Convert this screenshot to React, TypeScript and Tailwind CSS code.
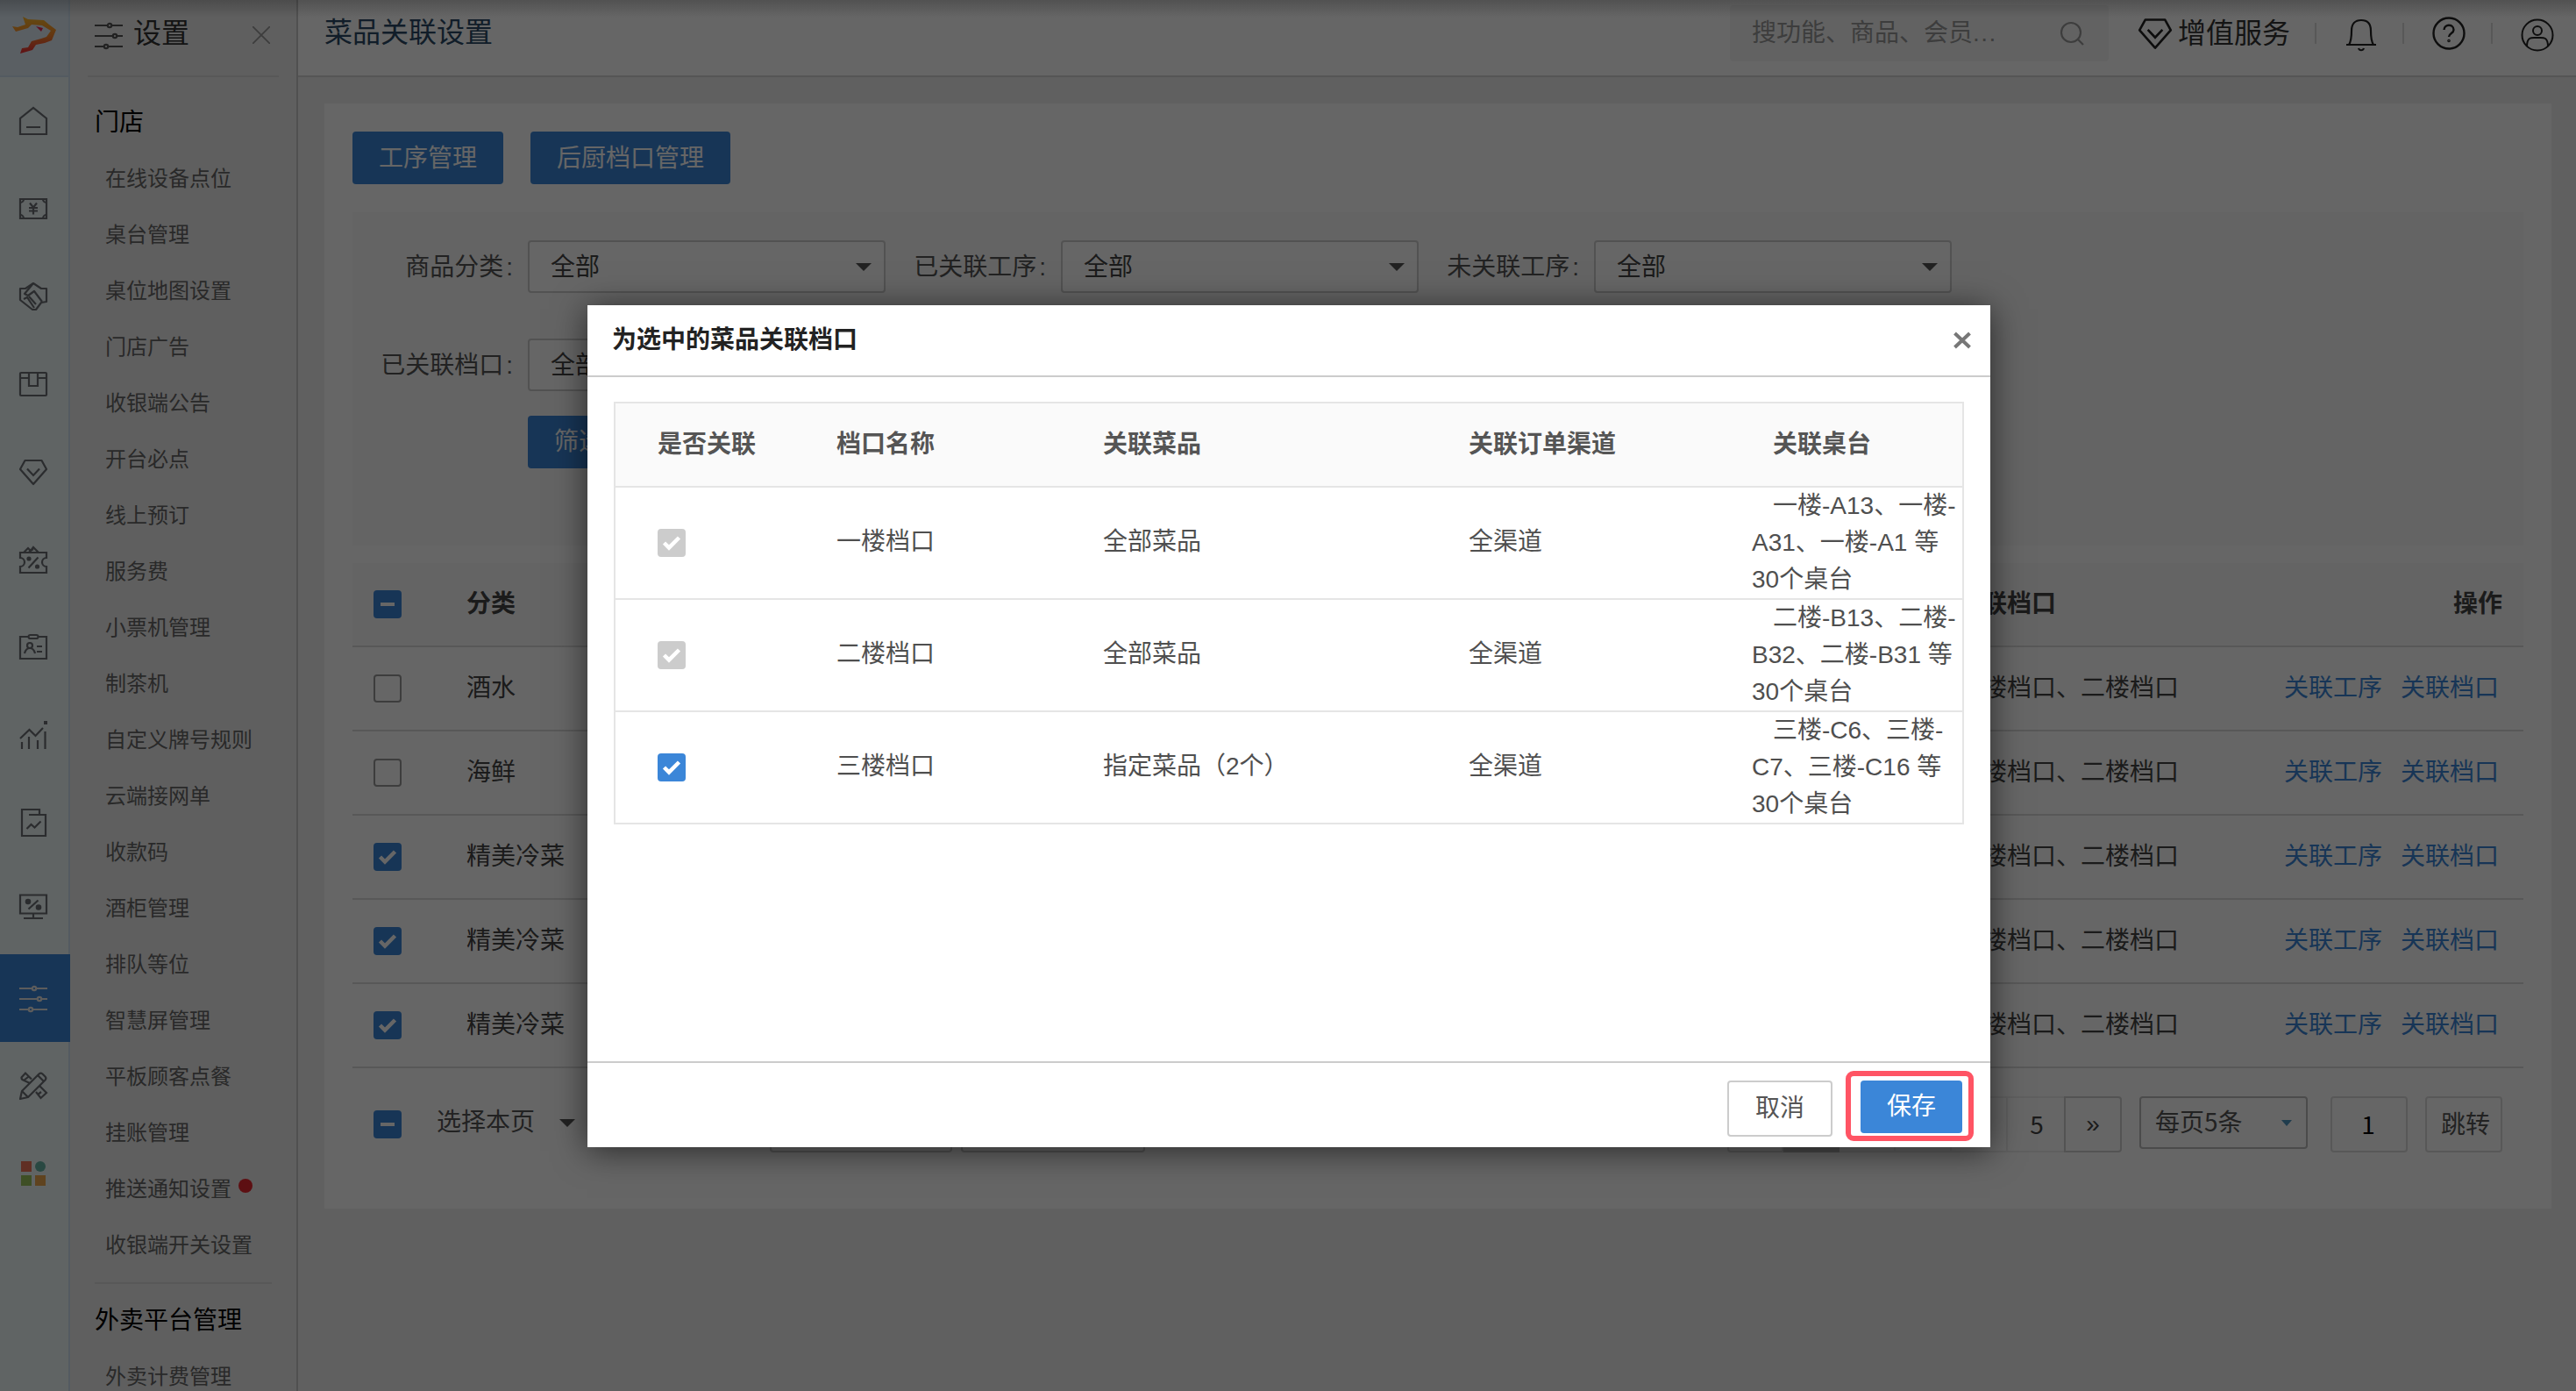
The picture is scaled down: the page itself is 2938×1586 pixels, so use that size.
import React from 'react';

const menuItems = [
  '在线设备点位',
  '桌台管理',
  '桌位地图设置',
  '门店广告',
  '收银端公告',
  '开台必点',
  '线上预订',
  '服务费',
  '小票机管理',
  '制茶机',
  '自定义牌号规则',
  '云端接网单',
  '收款码',
  '酒柜管理',
  '排队等位',
  '智慧屏管理',
  '平板顾客点餐',
  '挂账管理',
  '推送通知设置',
  '收银端开关设置',
];

const dishRows = [
  { id: 1, category: '酒水', checked: false },
  { id: 2, category: '海鲜', checked: false },
  { id: 3, category: '精美冷菜', checked: true },
  { id: 4, category: '精美冷菜', checked: true },
  { id: 5, category: '精美冷菜', checked: true },
];

const stallRows = [
  {
    name: '一楼档口',
    dishes: '全部菜品',
    channel: '全渠道',
    tables: ['一楼-A13、一楼-', 'A31、一楼-A1 等', '30个桌台'],
    disabled: true,
  },
  {
    name: '二楼档口',
    dishes: '全部菜品',
    channel: '全渠道',
    tables: ['二楼-B13、二楼-', 'B32、二楼-B31 等', '30个桌台'],
    disabled: true,
  },
  {
    name: '三楼档口',
    dishes: '指定菜品（2个）',
    channel: '全渠道',
    tables: ['三楼-C6、三楼-', 'C7、三楼-C16 等', '30个桌台'],
    disabled: false,
  },
];

function Icon({ children, className = 'size-8' }: { children: React.ReactNode; className?: string }) {
  return (
    <svg viewBox="0 0 32 32" fill="none" stroke="currentColor" strokeWidth="2.200" className={`overflow-visible ${className}`}>
      {children}
    </svg>
  );
}

const slidersShape = (
  <>
    <path d="M0 5h14.5M19.5 5H32M0 17h20.5M25.5 17H32M0 29h10.5M15.5 29H32" />
    <circle cx="17" cy="5" r="2.2" />
    <circle cx="23" cy="17" r="2.2" />
    <circle cx="13" cy="29" r="2.2" />
  </>
);

const diamondShape = (
  <>
    <path d="M6.5 3h19L31 13 16 30 1 13z" strokeLinejoin="round" />
    <path d="M9 12.5l7 7.5 7-7.5" />
  </>
);

// 左侧一级导航图标
const railIcons: { key: string; shape: React.ReactNode }[] = [
  { key: 'home', shape: <path d="M1 31V13L16 1l15 12v18zM8 23h16" /> },
  {
    key: 'cash',
    shape: (
      <>
        <path d="M1 5h30v22H1z" />
        <path d="M1 9a4 4 0 0 0 4-4M31 9a4 4 0 0 1-4-4M1 23a4 4 0 0 1 4 4M31 23a4 4 0 0 0-4 4" />
        <path d="M12 9.500l4 5 4-5M16 14v8.500M11 15h10M11 18.500h10" />
      </>
    ),
  },
  {
    key: 'handshake',
    shape: (
      <>
        <path d="M1 7h6l9-6 9 6h6v15l-6 1-6 8h-4L1 20z" strokeLinejoin="round" />
        <path d="M16 1L6 13l4 2 7-5 9 12M5 19l4-2 8 12M11 16l8 9" strokeLinejoin="round" />
      </>
    ),
  },
  {
    key: 'box',
    shape: (
      <>
        <rect x="1" y="3" width="30" height="26" rx="1" />
        <path d="M1 9h10M21 9h10M11 3v15h10V3" />
      </>
    ),
  },
  { key: 'diamond', shape: diamondShape },
  {
    key: 'ticket',
    shape: (
      <>
        <path d="M1 8h30v6a5 5 0 0 0 0 10v7H1v-7a5 5 0 0 0 0-10z" />
        <path d="M5 8l5-5 3 3 3-4 6 6M11 7l5-3M10.500 25.500l11-12" />
        <circle cx="11" cy="15" r="1.500" fill="currentColor" />
        <circle cx="20.500" cy="24" r="1.500" fill="currentColor" />
      </>
    ),
  },
  {
    key: 'badge',
    shape: (
      <>
        <path d="M10 4H1v25h30V4h-9" />
        <rect x="10.500" y="2" width="11" height="4" rx="2" />
        <circle cx="12" cy="14" r="3" />
        <path d="M6 23c1-4 3-6 6-6s5 2 6 6M20 15h6M20 21h6" />
      </>
    ),
  },
  {
    key: 'chart',
    shape: (
      <>
        <path d="M1 20L11.500 10l7 7L27 8M3 32v-8M11 32V18M21 32V22M29.500 32V12" />
        <path d="M28 0h4v4h-4z" fill="currentColor" stroke="none" />
      </>
    ),
  },
  {
    key: 'report',
    shape: (
      <>
        <path d="M11 7h19v24H3V1h20v6" />
        <path d="M8.500 23l5-5 4 3.500 7-7" />
      </>
    ),
  },
  {
    key: 'monitor',
    shape: (
      <g transform="translate(0 -2.500)">
        <path d="M1 1h30v21H1zM16 22v5M5 27.500h22" />
        <path d="M10.500 17L21.500 7" />
        <circle cx="10" cy="8.500" r="2.200" fill="currentColor" />
        <circle cx="22" cy="15" r="2.200" fill="currentColor" />
      </g>
    ),
  },
  { key: 'settings', shape: slidersShape },
  {
    key: 'tools',
    shape: (
      <>
        <path d="M1 31l2-9L22.500 2.500a3 3 0 0 1 4 0l3 3a3 3 0 0 1 0 4L10 29z" strokeLinejoin="round" />
        <path d="M3 22l7 7M21 4l7 7M12 13L4.500 9.500a3 3 0 0 1-2-3L7 1.500l7 7M5 10l5-4M19 23l5.500 7L31 24l-8-8M21 26l4-3" />
      </>
    ),
  },
];

function Logo() {
  return (
    <svg viewBox="13 18 52 44" className="ml-[13px] h-[44px] w-[52px]">
      <defs>
        <linearGradient id="logo" x1="0" y1="0" x2="0" y2="1">
          <stop offset="0" stopColor="#fcb82c" />
          <stop offset="0.500" stopColor="#f98a2c" />
          <stop offset="1" stopColor="#ee2c38" />
        </linearGradient>
      </defs>
      <path
        d="M14 30l6 1 9-3-3-9 6 3 18 1 6 5 8 6-5 12-8 3-10 2-4 6-14 4 2-6 7-1 4-7 11-3 6-2 5-7-10-6-12-1-4 4-14 4z"
        fill="url(#logo)"
      />
      <path d="M41 30l8 2-2 4z" fill="#ee2650" />
    </svg>
  );
}

function Caret({ className = 'text-[#555]' }: { className?: string }) {
  return (
    <svg viewBox="0 0 18 9" className={`h-[9px] w-[18px] ${className}`}>
      <path d="M0 0h18L9 9z" fill="currentColor" />
    </svg>
  );
}

function Checkbox({ state }: { state: 'off' | 'on' | 'some' | 'disabled' }) {
  if (state === 'off') {
    return <span className="block size-8 rounded border-2 border-[#999] bg-white" />;
  }
  return (
    <span
      className={`flex size-8 items-center justify-center rounded ${
        state === 'disabled' ? 'bg-[#ccc]' : 'bg-[#3b86d8]'
      }`}
    >
      {state === 'some' ? (
        <span className="h-1 w-4 bg-white" />
      ) : (
        <svg viewBox="0 0 32 32" className="size-8" fill="none" stroke="#fff" strokeWidth="4.500">
          <path d="M7.500 16l5.500 5.500L24.500 10" />
        </svg>
      )}
    </span>
  );
}

function FilterField({ label }: { label: string }) {
  return (
    <div className="flex h-[60px] w-[608px] items-center">
      <span className="w-[200px] pt-0.5 pr-[17px] text-right text-[#555]">
        {label}
        <span className="ml-[3px]">:</span>
      </span>
      <div className="flex h-[60px] w-[408px] items-center justify-between rounded border-2 border-[#ccc] bg-white pr-[14px] pl-6 text-[#444]">
        <span className="pt-0.5">全部</span>
        <Caret />
      </div>
    </div>
  );
}

function Rail() {
  return (
    <nav className="flex w-20 shrink-0 flex-col border-r-2 border-[#d3e3f2] bg-[#eff9fb]">
      <div className="flex h-[88px] items-center border-b-2 border-[#d3e3f2] bg-[#e2eef7] pb-1.5">
        <Logo />
      </div>
      {railIcons.map((icon) => (
        <div
          key={icon.key}
          className={`flex h-[100px] items-center pl-[22px] ${
            icon.key === 'settings' ? '-mr-0.5 bg-[#3b86d8] text-[#e6e6e6]' : 'text-[#6b6f74]'
          }`}
        >
          <Icon>{icon.shape}</Icon>
        </div>
      ))}
      <div className="flex h-[100px] items-center pl-6">
        <div className="grid grid-cols-2 gap-1">
          <span className="size-3 bg-[#f0765a]" />
          <span className="size-3 rounded-full bg-[#68b5a6]" />
          <span className="size-3 bg-[#9cc65c]" />
          <span className="size-3 bg-[#eda84e]" />
        </div>
      </div>
    </nav>
  );
}

function SettingsMenu() {
  return (
    <aside className="flex w-[260px] shrink-0 flex-col border-r-2 border-[#c8c8c8] bg-[#eee]">
      <div className="mr-5 ml-5 flex h-[88px] shrink-0 items-center border-b-2 border-[#dcdcdc] pb-2.5 pl-2">
        <Icon className="mt-1 size-8 text-[#555]">{slidersShape}</Icon>
        <span className="ml-3 flex-1 text-[32px] text-[#333]">设置</span>
        <svg viewBox="0 0 20 20" className="mt-1 mr-[10px] size-5" stroke="#999" strokeWidth="1.800">
          <path d="M0 0l20 20M20 0L0 20" />
        </svg>
      </div>
      <div className="mt-5 flex h-16 shrink-0 items-center pl-7 text-black">门店</div>
      {menuItems.map((item) => (
        <div key={item} className="flex h-16 shrink-0 items-center pb-px pl-10 text-[24px] text-[#666]">
          {item}
          {item === '推送通知设置' && <span className="mb-2 ml-2 size-4 rounded-full bg-[#e8262f]" />}
        </div>
      ))}
      <div className="mx-7 my-2.5 h-0.5 shrink-0 bg-[#dcdcdc]" />
      <div className="flex h-16 shrink-0 items-center pl-7 text-black">外卖平台管理</div>
      <div className="flex h-16 shrink-0 items-center pb-px pl-10 text-[24px] text-[#666]">外卖计费管理</div>
    </aside>
  );
}

function TopBar() {
  return (
    <header className="flex h-[88px] items-center border-b-2 border-[#d4d4d4] bg-white pb-2.5">
      <h1 className="flex-1 pb-0.5 pl-[30px] text-[32px] text-[#2b4a66]">菜品关联设置</h1>
      <div className="flex h-16 w-[432px] items-center justify-between rounded bg-[#f6f6f6] pr-7 pl-[25px] text-[#999]">
        <span>
          搜功能、商品、会员<span className="tracking-[1.5px]">...</span>
        </span>
        <svg viewBox="0 0 28 28" className="size-7" fill="none" stroke="#999" strokeWidth="2.200">
          <circle cx="13" cy="13" r="11" />
          <path d="M21 21l6 6" />
        </svg>
      </div>
      <Icon className="ml-[34px] size-[38px] text-[#222]">{diamondShape}</Icon>
      <span className="ml-[7px] text-[32px] text-[#333]">增值服务</span>
      <i className="ml-[28px] h-6 w-0.5 bg-[#ddd]" />
      <svg viewBox="0 0 34 38" className="mt-1 ml-[34px] h-[38px] w-[34px] text-[#222]" fill="none" stroke="currentColor" strokeWidth="2.200">
        <path d="M0 30h34M3 30c2-3 3-7 3-16C6 6 10 2 17 2s11 4 11 12c0 9 1 13 3 16M14 34c1 3 5 3 6 0" />
      </svg>
      <i className="ml-[30px] h-6 w-0.5 bg-[#ddd]" />
      <svg viewBox="0 0 38 38" className="ml-8 size-[38px] text-[#222]" fill="none" stroke="currentColor" strokeWidth="2.400">
        <circle cx="19" cy="19" r="17.500" />
        <path d="M13.500 15c0-7 11-7 11 0 0 4-5.500 4-5.500 8" />
        <circle cx="19" cy="27.500" r="0.600" />
      </svg>
      <i className="ml-[29px] h-6 w-0.5 bg-[#ddd]" />
      <svg viewBox="0 0 38 38" className="mt-1 mr-[25px] ml-[32px] size-[38px] text-[#222]" fill="none" stroke="currentColor" strokeWidth="2">
        <circle cx="19" cy="19" r="17.500" />
        <circle cx="19" cy="14" r="5" />
        <path d="M7 32c0-12 6-10 12-10s12-2 12 10" />
      </svg>
    </header>
  );
}

function Pager() {
  return (
    <div className="flex h-16 items-start">
      <div className="flex h-16 text-[#444]">
        <span className="w-16 rounded-l border-2 border-[#ddd]" />
        <span className="w-16 bg-[#bbb]" />
        <span className="w-16 border-y-2 border-r-2 border-[#eee]" />
        <span className="w-16 border-y-2 border-r-2 border-[#eee]" />
        <span className="w-16 border-y-2 border-r-2 border-[#eee]" />
        <span className="flex w-16 items-center justify-center border-y-2 border-[#eee] pb-0.5 pl-0.5 font-['Noto_Sans_CJK_SC',sans-serif]">
          5
        </span>
        <span className="flex w-[66px] items-center justify-center rounded-r border-2 border-[#d0d0d0]">»</span>
      </div>
      <div className="ml-5 flex h-[60px] w-48 items-center justify-between rounded border-2 border-[#bbb] pr-4 pb-1 pl-4 font-['Noto_Sans_CJK_SC',sans-serif] text-[#555]">
        每页5条
        <svg viewBox="0 0 12 7" className="mt-1 h-[7px] w-3">
          <path d="M0 0h12L6 7z" fill="#4f97c0" />
        </svg>
      </div>
      <span className="ml-[26px] flex h-16 w-22 items-center justify-center rounded border-2 border-[#ddd] pr-0.5 pb-0.5 font-['Noto_Sans_CJK_SC',sans-serif] text-black">
        1
      </span>
      <span className="ml-5 flex h-16 w-22 items-center justify-center rounded border-2 border-[#ddd] pt-0.5 pl-1 text-[#555]">跳转</span>
    </div>
  );
}

function DishPage() {
  return (
    <main className="mt-[30px] mr-7 ml-[30px] h-[1260px] bg-white px-8 pt-8">
      <div className="flex gap-[31px] text-white">
        <button className="h-[60px] w-[172px] rounded bg-[#3b86d8] pt-px">工序管理</button>
        <button className="h-[60px] w-[228px] rounded bg-[#3b86d8] pt-px">后厨档口管理</button>
      </div>

      <section className="mt-8 h-[380px] bg-[#fafafa] pt-8">
        <div className="flex">
          <FilterField label="商品分类" />
          <FilterField label="已关联工序" />
          <FilterField label="未关联工序" />
        </div>
        <div className="mt-[52px] flex">
          <FilterField label="已关联档口" />
        </div>
        <button className="mt-7 ml-[200px] h-[60px] w-[116px] rounded bg-[#3b86d8] text-white">筛选</button>
      </section>

      <section className="mt-5 text-[#444]">
        <div className="flex h-24 items-center border-b-2 border-[#ddd] bg-[#fafafa] pl-6 font-bold">
          <Checkbox state="some" />
          <span className="ml-[74px] w-[1701px]">分类</span>
          <span>关联档口</span>
          <span className="mr-6 ml-auto">操作</span>
        </div>
        {dishRows.map((row) => (
          <div key={row.id} className="flex h-24 items-center border-b-2 border-[#ddd] pl-6">
            <Checkbox state={row.checked ? 'on' : 'off'} />
            <span className="ml-[74px] w-[1701px]">{row.category}</span>
            <span>一楼档口、二楼档口</span>
            <span className="mr-7 ml-auto flex gap-[21px] text-[#3b86d8]">
              <a>关联工序</a>
              <a>关联档口</a>
            </span>
          </div>
        ))}
      </section>

      <div className="mt-8 flex h-16 items-center pr-6 pl-6 text-[#555]">
        <Checkbox state="some" />
        <span className="ml-10 pb-1">选择本页</span>
        <Caret className="-mt-1 ml-[28px] text-[#555]" />
        <span className="ml-[222px] h-16 w-[208px] rounded border-2 border-[#ccc]" />
        <span className="ml-2.5 h-16 w-[210px] rounded border-2 border-[#ccc]" />
        <div className="ml-auto">
          <Pager />
        </div>
      </div>
    </main>
  );
}

function StallDialog() {
  return (
    <div className="flex h-[960px] w-[1600px] flex-col bg-white shadow-[0_4px_36px_rgba(0,0,0,0.6)]">
      <div className="flex h-[82px] items-center justify-between border-b-2 border-[#ccc] pr-[22px] pl-7">
        <h2 className="font-bold text-[#222]">为选中的菜品关联档口</h2>
        <svg viewBox="0 0 20 20" className="size-5" stroke="#777" strokeWidth="4">
          <path d="M1.500 2l17 16M18.500 2l-17 16" />
        </svg>
      </div>

      <div className="flex-1 px-[30px] pt-7 text-[#4f4f4f]">
        <div className="border-2 border-b-0 border-[#e5e5e5]">
          <div className="grid h-24 grid-cols-[252px_304px_417px_347px_1fr] items-center border-b-2 border-[#e5e5e5] bg-[#fafafa] font-bold text-[#555]">
            <span className="pl-12">是否关联</span>
            <span>档口名称</span>
            <span>关联菜品</span>
            <span>关联订单渠道</span>
            <span>关联桌台</span>
          </div>
          {stallRows.map((row) => (
            <div
              key={row.name}
              className="grid h-32 grid-cols-[252px_304px_417px_323px_1fr] items-center border-b-2 border-[#e5e5e5]"
            >
              <span className="pl-12">
                <Checkbox state={row.disabled ? 'disabled' : 'on'} />
              </span>
              <span className="pb-0.5">{row.name}</span>
              <span className="pb-0.5">{row.dishes}</span>
              <span className="pb-0.5">{row.channel}</span>
              <div className="indent-6">
                {row.tables[0]}
                <br />
                {row.tables[1]}
                <br />
                {row.tables[2]}
              </div>
            </div>
          ))}
        </div>
      </div>

      <div className="flex h-[98px] justify-end gap-8 border-t-2 border-[#ccc] pt-5 pr-8 text-[#555]">
        <button className="h-16 w-[120px] rounded border-2 border-[#ccc]">取消</button>
        <div className="relative">
          <button className="h-[60px] w-[116px] rounded bg-[#3b86d8] text-white">保存</button>
          {/* 高亮保存按钮 */}
          <span className="absolute -top-[11px] -left-[17px] h-20 w-[146px] rounded-[9px] border-6 border-[#ff5464]" />
        </div>
      </div>
    </div>
  );
}

export default function App() {
  return (
    <div className="relative h-[1586px] w-[2938px] overflow-hidden bg-[#f0f0f0] font-['Liberation_Sans','Noto_Sans_CJK_SC',sans-serif] text-[28px] leading-[42px]">
      <div className="flex h-full">
        <Rail />
        <SettingsMenu />
        <div className="min-w-0 flex-1">
          <TopBar />
          <DishPage />
        </div>
      </div>

      {/* 遮罩与弹窗 */}
      <div className="absolute inset-0 flex items-start bg-black/60 pt-[348px] pl-[670px]">
        <StallDialog />
      </div>
      <div className="absolute inset-x-0 top-0 h-5 bg-linear-to-b from-black/20 to-transparent" />
    </div>
  );
}
